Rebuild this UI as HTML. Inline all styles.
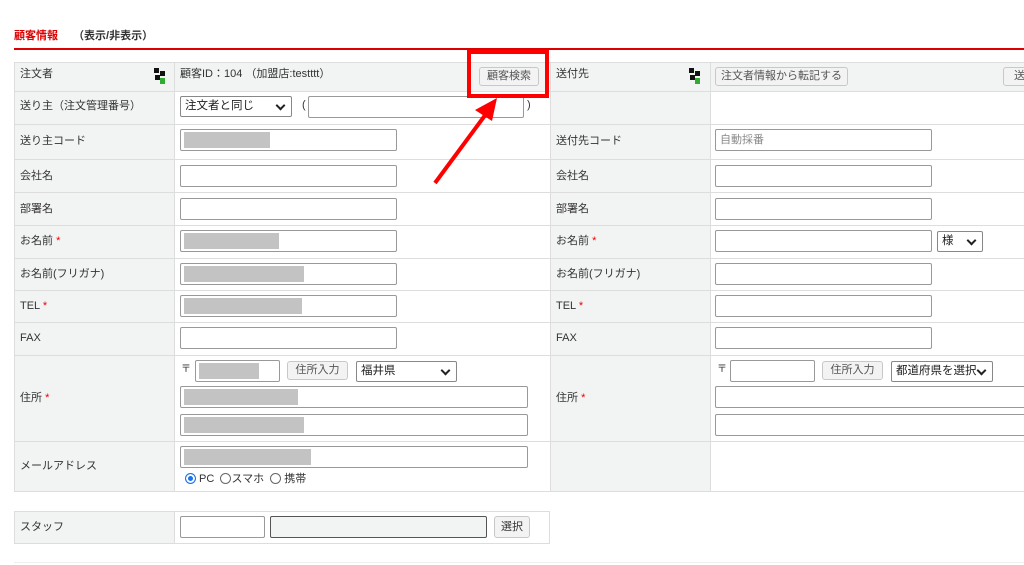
<!DOCTYPE html>
<html><head><meta charset="utf-8"><style>
body{margin:0;width:1024px;height:565px;overflow:hidden;background:#fff;font-family:"Liberation Sans","Noto Sans CJK JP",sans-serif;font-size:11px;color:#333;position:relative}
div,span{position:absolute;box-sizing:border-box}
.l{background:#f2f3f3}
.h{height:1px;background:#ddd}
.v{width:1px;background:#ddd}
.t{white-space:nowrap;line-height:14px}
.in{border:1px solid #999;border-radius:2px;background:#fff;height:22px}
.g{background:#c3c3c3;height:16px;top:2px;left:3px}
.btn{border:1px solid #c8c8c8;border-radius:3px;background:#f3f3f3;color:#555;text-align:center;line-height:16px;height:19px;font-size:11px;white-space:nowrap}
.sel{border:1px solid #888;border-radius:2px;background:#fff;height:21px;line-height:19px;padding-left:4px;white-space:nowrap;font-size:11.5px;color:#222}
.sel:after{content:"";position:absolute;right:7px;top:5px;width:5px;height:5px;border-right:2px solid #222;border-bottom:2px solid #222;transform:rotate(45deg)}
.req{color:#e00}
</style></head><body>
<div class="t" style="left:14px;top:29px;color:#d00;font-weight:bold;font-size:11px">顧客情報 <span style="position:static;color:#333;margin-left:12px">（表示/非表示）</span></div>
<div style="left:14px;top:48px;width:1010px;height:2px;background:#d00"></div>

<!-- backgrounds -->
<div class="l" style="left:14px;top:62px;width:160px;height:430px"></div>
<div class="l" style="left:174px;top:62px;width:850px;height:29px"></div>
<div class="l" style="left:550px;top:91px;width:160px;height:401px"></div>
<!-- horizontal lines -->
<div class="h" style="left:14px;top:62px;width:1010px"></div>
<div class="h" style="left:14px;top:91px;width:1010px"></div>
<div class="h" style="left:14px;top:124px;width:1010px"></div>
<div class="h" style="left:14px;top:159px;width:1010px"></div>
<div class="h" style="left:14px;top:192px;width:1010px"></div>
<div class="h" style="left:14px;top:225px;width:1010px"></div>
<div class="h" style="left:14px;top:258px;width:1010px"></div>
<div class="h" style="left:14px;top:290px;width:1010px"></div>
<div class="h" style="left:14px;top:322px;width:1010px"></div>
<div class="h" style="left:14px;top:355px;width:1010px"></div>
<div class="h" style="left:14px;top:441px;width:1010px"></div>
<div class="h" style="left:14px;top:491px;width:1010px"></div>
<div class="v" style="left:14px;top:62px;height:430px"></div>
<div class="v" style="left:174px;top:62px;height:430px"></div>
<div class="v" style="left:550px;top:62px;height:430px"></div>
<div class="v" style="left:710px;top:62px;height:430px"></div>

<!-- labels left -->
<div class="t" style="left:20px;top:67px">注文者</div>
<svg style="position:absolute;left:153px;top:67px" width="14" height="18"><rect x="1" y="1" width="5" height="5" fill="#111"/><rect x="7" y="4" width="5" height="5" fill="#111"/><rect x="2" y="8" width="5" height="5" fill="#111"/><rect x="7" y="11" width="5" height="6" fill="#3a3"/></svg>
<div class="t" style="left:180px;top:67px">顧客ID：104 （加盟店:testttt）</div>
<div class="btn" style="left:479px;top:67px;width:60px">顧客検索</div>
<div class="t" style="left:20px;top:99px">送り主（注文管理番号）</div>
<div class="sel" style="left:180px;top:96px;width:112px">注文者と同じ</div>
<div class="t" style="left:302px;top:98px">(</div>
<div class="in" style="left:308px;top:96px;width:216px"></div>
<div class="t" style="left:527px;top:98px">)</div>

<div class="t" style="left:20px;top:134px">送り主コード</div>
<div class="in" style="left:180px;top:129px;width:217px"><div class="g" style="width:86px"></div></div>
<div class="t" style="left:20px;top:169px">会社名</div>
<div class="in" style="left:180px;top:165px;width:217px"></div>
<div class="t" style="left:20px;top:202px">部署名</div>
<div class="in" style="left:180px;top:198px;width:217px"></div>
<div class="t" style="left:20px;top:234px">お名前 <span class="req" style="position:static">*</span></div>
<div class="in" style="left:180px;top:230px;width:217px"><div class="g" style="width:95px"></div></div>
<div class="t" style="left:20px;top:267px">お名前(フリガナ)</div>
<div class="in" style="left:180px;top:263px;width:217px"><div class="g" style="width:120px"></div></div>
<div class="t" style="left:20px;top:299px">TEL <span class="req" style="position:static">*</span></div>
<div class="in" style="left:180px;top:295px;width:217px"><div class="g" style="width:118px"></div></div>
<div class="t" style="left:20px;top:331px">FAX</div>
<div class="in" style="left:180px;top:327px;width:217px"></div>
<div class="t" style="left:20px;top:391px">住所 <span class="req" style="position:static">*</span></div>
<div class="t" style="left:181px;top:363px;font-size:10px">〒</div>
<div class="in" style="left:195px;top:360px;width:85px"><div class="g" style="width:60px"></div></div>
<div class="btn" style="left:287px;top:361px;width:61px">住所入力</div>
<div class="sel" style="left:356px;top:361px;width:101px">福井県</div>
<div class="in" style="left:180px;top:386px;width:348px"><div class="g" style="width:114px"></div></div>
<div class="in" style="left:180px;top:414px;width:348px"><div class="g" style="width:120px"></div></div>
<div class="t" style="left:20px;top:459px">メールアドレス</div>
<div class="in" style="left:180px;top:446px;width:348px"><div class="g" style="width:127px"></div></div>
<div class="t" style="left:185px;top:472px"><span style="position:relative;display:inline-block;width:11px;height:11px;border-radius:50%;background:#1a73e8;vertical-align:-2px;box-shadow:inset 0 0 0 2px #fff;border:1px solid #1a73e8"></span> PC &nbsp;<span style="position:relative;display:inline-block;width:11px;height:11px;border-radius:50%;border:1px solid #666;vertical-align:-2px"></span>スマホ &nbsp;<span style="position:relative;display:inline-block;width:11px;height:11px;border-radius:50%;border:1px solid #666;vertical-align:-2px"></span> 携帯</div>

<!-- right -->
<div class="t" style="left:556px;top:67px">送付先</div>
<svg style="position:absolute;left:688px;top:67px" width="14" height="18"><rect x="1" y="1" width="5" height="5" fill="#111"/><rect x="7" y="4" width="5" height="5" fill="#111"/><rect x="2" y="8" width="5" height="5" fill="#111"/><rect x="7" y="11" width="5" height="6" fill="#3a3"/></svg>
<div class="btn" style="left:715px;top:67px;width:133px">注文者情報から転記する</div>
<div class="btn" style="left:1003px;top:67px;width:40px;text-align:left;padding-left:10px">送</div>
<div class="t" style="left:556px;top:134px">送付先コード</div>
<div class="in" style="left:715px;top:129px;width:217px;color:#888;line-height:20px;padding-left:4px">自動採番</div>
<div class="t" style="left:556px;top:169px">会社名</div>
<div class="in" style="left:715px;top:165px;width:217px"></div>
<div class="t" style="left:556px;top:202px">部署名</div>
<div class="in" style="left:715px;top:198px;width:217px"></div>
<div class="t" style="left:556px;top:234px">お名前 <span class="req" style="position:static">*</span></div>
<div class="in" style="left:715px;top:230px;width:217px"></div>
<div class="sel" style="left:937px;top:231px;width:46px">様</div>
<div class="t" style="left:556px;top:267px">お名前(フリガナ)</div>
<div class="in" style="left:715px;top:263px;width:217px"></div>
<div class="t" style="left:556px;top:299px">TEL <span class="req" style="position:static">*</span></div>
<div class="in" style="left:715px;top:295px;width:217px"></div>
<div class="t" style="left:556px;top:331px">FAX</div>
<div class="in" style="left:715px;top:327px;width:217px"></div>
<div class="t" style="left:556px;top:391px">住所 <span class="req" style="position:static">*</span></div>
<div class="t" style="left:717px;top:363px;font-size:10px">〒</div>
<div class="in" style="left:730px;top:360px;width:85px"></div>
<div class="btn" style="left:822px;top:361px;width:61px">住所入力</div>
<div class="sel" style="left:891px;top:361px;width:102px">都道府県を選択</div>
<div class="in" style="left:715px;top:386px;width:320px"></div>
<div class="in" style="left:715px;top:414px;width:320px"></div>

<!-- staff -->
<div class="l" style="left:14px;top:511px;width:160px;height:33px"></div>
<div class="h" style="left:14px;top:511px;width:536px"></div>
<div class="h" style="left:14px;top:543px;width:536px"></div>
<div class="v" style="left:14px;top:511px;height:33px"></div>
<div class="v" style="left:174px;top:511px;height:33px"></div>
<div class="v" style="left:549px;top:511px;height:33px"></div>
<div class="t" style="left:20px;top:520px">スタッフ</div>
<div class="in" style="left:180px;top:516px;width:85px"></div>
<div class="in" style="left:270px;top:516px;width:217px;background:#f2f3f3;border:1px solid #555"></div>
<div class="btn" style="left:494px;top:516px;width:36px;height:22px;line-height:20px;color:#333">選択</div>
<div class="h" style="left:14px;top:562px;width:1010px;background:#eee"></div>

<!-- annotation -->
<div style="left:467px;top:50px;width:82px;height:48px;border:4px solid #f00"></div>
<svg style="position:absolute;left:0;top:0" width="1024" height="565"><line x1="435" y1="183" x2="486" y2="114" stroke="#f00" stroke-width="4"/><polygon points="497,98 475,110 492,121" fill="#f00"/></svg>
</body></html>
